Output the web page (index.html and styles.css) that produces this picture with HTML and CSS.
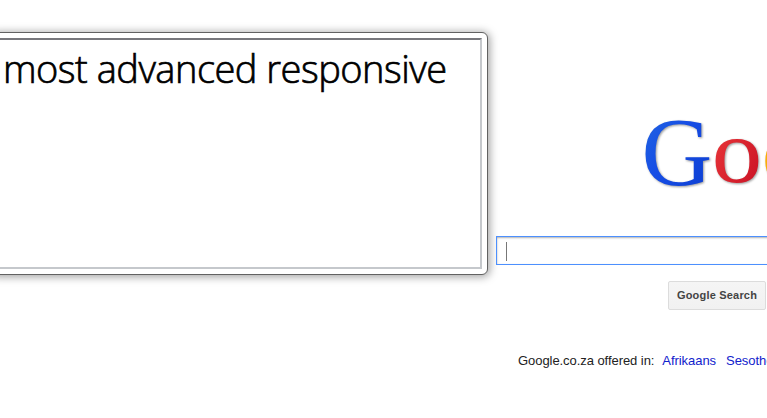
FILE: index.html
```html
<!DOCTYPE html>
<html lang="en">
<head>
<meta charset="utf-8">
<title>Google</title>
<link rel="stylesheet" href="styles.css">
</head>
<body>
<div class="screen">
  <section class="window">
    <div class="window-body"><p class="headline">most advanced responsive</p></div>
  </section>
  <main class="search-page">
    <svg class="logo" width="126" height="90" viewBox="0 0 126 90" role="img" aria-label="Google">
      <defs>
        <linearGradient id="blue" x1="0" y1="0" x2="1" y2="1"><stop offset="0" stop-color="#246be0"/><stop offset=".45" stop-color="#164de5"/><stop offset="1" stop-color="#0c3dce"/></linearGradient>
        <linearGradient id="red" x1="0" y1="0" x2="1" y2="1"><stop offset="0" stop-color="#ef3e3e"/><stop offset="1" stop-color="#c60d22"/></linearGradient>
      </defs>
      <text class="letter" transform="translate(-.6 74.5) scale(1 1)" font-size="98" fill="url(#blue)">G</text>
      <text class="letter" transform="translate(69.8 72.2) scale(1.12 1)" font-size="90" fill="url(#red)">o</text>
      <text class="letter" transform="translate(119.5 72.2) scale(1.12 1)" font-size="90" fill="#f9ad08">o</text>
    </svg>
    <div class="search-box"><span class="caret"></span></div>
    <button class="search-button">Google Search</button>
    <p class="languages"><span>Google.co.za offered in:</span><a>Afrikaans</a><a>Sesotho</a></p>
  </main>
</div>
</body>
</html>
```
FILE: styles.css
```css
* { box-sizing: border-box; }
body { margin: 0; background: #fff; overflow: hidden; }
.screen { display: flex; width: 767px; height: 418px; overflow: hidden; }
.window {
  flex: none;
  width: 498px;
  height: 243px;
  margin: 32px 0 0 -10px;
  padding: 5px;
  border: 1px solid #626262;
  border-radius: 6px;
  background: #fff;
  box-shadow: 1px 1px 9px 1px rgba(0, 0, 0, .36);
}
.window-body {
  height: 231px;
  border: solid;
  border-width: 2px 2px 2px 1px;
  border-color: #77777c #c5c8cc #c5c8cc #77777c;
  background: #fff;
}
.headline {
  margin: 2px 0 0 6px;
  color: #000;
  font: 300 38px/52px "Open Sans", "Noto Sans", sans-serif;
  letter-spacing: -.5px;
  -webkit-text-stroke: .7px #000;
  white-space: nowrap;
}
.search-page {
  flex: none;
  display: flex;
  flex-direction: column;
  align-items: flex-start;
  width: 400px;
  padding: 110px 0 0 8px;
  font-family: "Liberation Sans", Arial, sans-serif;
}
.logo { flex: none; margin-left: 146px; filter: drop-shadow(1px 1px 1px rgba(0, 0, 0, .4)); }
.letter { font-family: "Liberation Serif", serif; }
.search-box {
  width: 390px;
  height: 29px;
  margin-top: 36px;
  padding: 5px 9px;
  border: 1px solid #4d90fe;
  box-shadow: inset 0 1px 2px rgba(0, 0, 0, .3);
}
.caret { display: block; width: 1px; height: 19px; background: #777; }
.search-button {
  width: 98px;
  height: 29px;
  margin: 16px 0 0 172px;
  padding: 0;
  border: 1px solid #dcdcdc;
  border-radius: 2px;
  background: linear-gradient(#f5f5f5, #f1f1f1);
  color: #444;
  font: bold 11px/27px "Liberation Sans", Arial, sans-serif;
  letter-spacing: .2px;
  white-space: nowrap;
}
.languages {
  display: flex;
  margin: 42px 0 0 22px;
  color: #222;
  font-size: 13px;
  line-height: 18px;
  letter-spacing: -.06px;
  white-space: nowrap;
}
.languages a { margin-left: 8px; color: #12c; }
.languages a + a { margin-left: 10px; }
```
